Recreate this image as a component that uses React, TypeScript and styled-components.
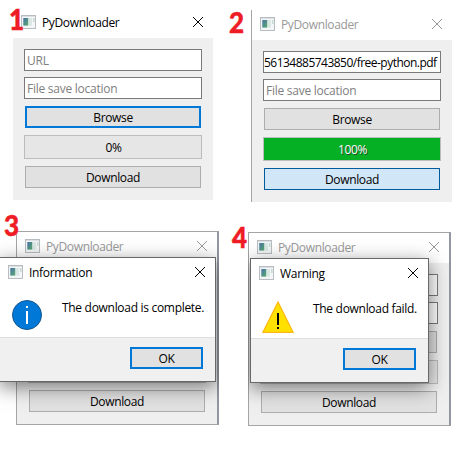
import React from "react";
import styled, { createGlobalStyle, css } from "styled-components";

const Global = createGlobalStyle`
  * { box-sizing: border-box; }
  body { margin: 0; background: #fff; }
`;

const Desktop = styled.main`
  position: relative;
  width: 460px;
  height: 452px;
  overflow: hidden;
  background: #fff;
  color: #000;
  font: 12px/16px "Open Sans", "Noto Sans", sans-serif;
`;

const Scene = styled.section<{ $x: number; $y: number; $w: number; $h: number }>`
  position: absolute;
  left: ${(p) => p.$x}px;
  top: ${(p) => p.$y}px;
  width: ${(p) => p.$w}px;
  height: ${(p) => p.$h}px;
  overflow: hidden;
`;

const Step = styled.b<{ $x: number; $y: number }>`
  position: absolute;
  left: ${(p) => p.$x}px;
  top: ${(p) => p.$y}px;
  color: #ee1c25;
  font-family: Lato, sans-serif;
  font-weight: 900;
  font-size: 28px;
  line-height: 28px;
  -webkit-text-stroke: 0.5px #ee1c25;
  transform: scaleX(0.93);
  transform-origin: left;
`;

type Frame = "none" | "left" | "full";

const Window = styled.div<{ $x: number; $frame: Frame }>`
  width: ${(p) => (p.$frame === "full" ? 203 : p.$frame === "left" ? 201 : 200)}px;
  margin-left: ${(p) => p.$x}px;
  background: #efefef;
  ${(p) => p.$frame === "left" && css`border-left: 1px solid #a5a5a5;`}
  ${(p) =>
    p.$frame === "full" &&
    css`
      border: 1px solid #a5a5a5;
      border-right: 2px solid #9297a2;
    `}
`;

const TitleBar = styled.header<{ $dim?: boolean }>`
  display: flex;
  align-items: center;
  height: 30px;
  padding: 0 9px 2px 8px;
  background: #fff;
  color: ${(p) => (p.$dim ? "#999" : "#000")};
`;

const Title = styled.span<{ $spacing: number }>`
  flex: 1;
  margin-left: 6px;
  padding-top: 2px;
  letter-spacing: ${(p) => p.$spacing}px;
  white-space: nowrap;
`;

const Form = styled.div`
  display: flex;
  flex-direction: column;
  gap: 6px;
  padding: 11px;
`;

const Field = styled.div<{ $filled?: boolean }>`
  height: 22px;
  padding: ${(p) => (p.$filled ? "3px 0 0 0" : "3px 0 0 2px")};
  border: 1px solid #7a7a7a;
  background: #fff;
  color: ${(p) => (p.$filled ? "#000" : "#808080")};
  letter-spacing: ${(p) => (p.$filled ? "-0.52px" : "-0.25px")};
  white-space: nowrap;
  overflow: hidden;
`;

const looks = {
  plain: css`border: 1px solid #adadad; background: #e1e1e1;`,
  focus: css`border: 2px solid #0078d7; background: #e1e1e1;`,
  pressed: css`border: 1px solid #005a9e; background: #d1e6f6;`,
};

const Button = styled.button<{ $look?: keyof typeof looks; $w?: number }>`
  display: flex;
  align-items: center;
  justify-content: center;
  height: 22px;
  width: ${(p) => (p.$w ? `${p.$w}px` : "auto")};
  margin: ${(p) => (p.$w ? "0" : "1px")};
  padding: 1px 0 0;
  border-radius: 0;
  color: #000;
  font: inherit;
  letter-spacing: -0.35px;
  ${(p) => looks[p.$look ?? "plain"]}
`;

const Progress = styled.div<{ $done?: boolean }>`
  display: flex;
  align-items: center;
  justify-content: center;
  height: 24px;
  padding: 2px 0 0 1px;
  border: 1px solid #bcbcbc;
  background: ${(p) => (p.$done ? "#06b025" : "#e6e6e6")};
  color: ${(p) => (p.$done ? "#fff" : "#000")};
  letter-spacing: -0.35px;
  text-shadow: ${(p) => (p.$done ? "1px 1px 0 #234b2a" : "none")};
`;

const Dialog = styled.div<{ $x: number; $y: number; $w: number }>`
  position: absolute;
  left: ${(p) => p.$x}px;
  top: ${(p) => p.$y}px;
  width: ${(p) => p.$w}px;
  height: 125px;
  display: flex;
  flex-direction: column;
  border: 1px solid #686868;
  background: #fff;
  box-shadow: 0 5px 18px rgba(0, 0, 0, 0.5);
`;

const Message = styled.div<{ $spacing: number }>`
  display: flex;
  flex: 1;
  padding: 12px 0 0 11px;
  letter-spacing: ${(p) => p.$spacing}px;
  white-space: nowrap;
`;

const MessageText = styled.span<{ $gap: number }>`
  margin-left: ${(p) => p.$gap}px;
`;

const Footer = styled.footer`
  display: flex;
  justify-content: flex-end;
  height: 44px;
  padding: 9px 12px 0 0;
  border-top: 1px solid #dfdfdf;
  background: #f0f0f0;
`;

const AppIcon = () => (
  <svg width="15" height="14" viewBox="0 0 15 14">
    <defs>
      <linearGradient id="screen" x1="0" y1="0" x2="1" y2="1">
        <stop offset="0" stopColor="#4a70a8" />
        <stop offset="1" stopColor="#56ad6c" />
      </linearGradient>
    </defs>
    <rect x=".5" y=".5" width="14" height="13" fill="#f3f5f7" stroke="#b8bdc1" />
    <path d="M1 1.5h13" stroke="#dce0e4" />
    <rect x="2.3" y="3" width="5" height="7.6" fill="url(#screen)" />
    <rect x="8" y="3" width="3" height="7.6" fill="#d9e8e4" />
    <rect x="12" y="3" width="1.5" height="4" fill="#c8dacf" />
  </svg>
);

const CloseIcon = () => (
  <svg width="12" height="12" viewBox="0 0 12 12" fill="none" stroke="currentColor" strokeWidth="1">
    <path d="M1 1l10 10M11 1L1 11" />
  </svg>
);

const InfoIcon = () => (
  <svg width="32" height="32" viewBox="0 0 32 32">
    <circle cx="16" cy="15" r="14.5" fill="#0078d7" stroke="#14568f" />
    <path d="M15 6h2v2h-2zM15 11h2v13h-2z" fill="#fff" />
  </svg>
);

const WarningIcon = () => (
  <svg width="32" height="32" viewBox="0 0 32 32">
    <path d="M16 1L31.2 31.5H.8z" fill="#ffe000" stroke="#fdb913" strokeWidth="1.3" />
    <path d="M15 12h2v12h-2zM15 26h2v2h-2z" fill="#000" />
  </svg>
);

interface DownloaderProps {
  x: number;
  frame: Frame;
  url?: string;
  done?: boolean;
  browse?: keyof typeof looks;
  download?: keyof typeof looks;
}

const Downloader = ({ x, frame, url, done, browse, download }: DownloaderProps) => (
  <Window $x={x} $frame={frame}>
    <TitleBar $dim={frame !== "none"}>
      <AppIcon />
      <Title $spacing={-0.36}>PyDownloader</Title>
      <CloseIcon />
    </TitleBar>
    <Form>
      <Field $filled={!!url}>{url ?? "URL"}</Field>
      <Field>File save location</Field>
      <Button $look={browse}>Browse</Button>
      <Progress $done={done}>{done ? "100%" : "0%"}</Progress>
      <Button $look={download}>Download</Button>
    </Form>
  </Window>
);

export default function App() {
  return (
    <Desktop>
      <Global />
      <Scene $x={0} $y={8} $w={220} $h={192}>
        <Downloader x={13} frame="none" browse="focus" />
      </Scene>
      <Scene $x={251} $y={10} $w={201} $h={192}>
        <Downloader x={0} frame="left" url="56134885743850/free-python.pdf" done download="pressed" />
      </Scene>
      <Scene $x={0} $y={231} $w={219} $h={194}>
        <Downloader x={16} frame="full" done />
        <Dialog $x={-1} $y={26} $w={217}>
          <TitleBar>
            <AppIcon />
            <Title $spacing={-0.3}>Information</Title>
            <CloseIcon />
          </TitleBar>
          <Message $spacing={-0.3}>
            <InfoIcon />
            <MessageText $gap={19}>The download is complete.</MessageText>
          </Message>
          <Footer>
            <Button $w={73} $look="focus">OK</Button>
          </Footer>
        </Dialog>
      </Scene>
      <Scene $x={248} $y={232} $w={203} $h={194}>
        <Downloader x={0} frame="full" />
        <Dialog $x={2} $y={26} $w={179}>
          <TitleBar>
            <AppIcon />
            <Title $spacing={-0.3}>Warning</Title>
            <CloseIcon />
          </TitleBar>
          <Message $spacing={-0.3}>
            <WarningIcon />
            <MessageText $gap={19}>The download faild.</MessageText>
          </Message>
          <Footer>
            <Button $w={73} $look="focus">OK</Button>
          </Footer>
        </Dialog>
      </Scene>
      <Step $x={9} $y={5}>1</Step>
      <Step $x={229} $y={8}>2</Step>
      <Step $x={4} $y={211}>3</Step>
      <Step $x={232} $y={223}>4</Step>
    </Desktop>
  );
}
